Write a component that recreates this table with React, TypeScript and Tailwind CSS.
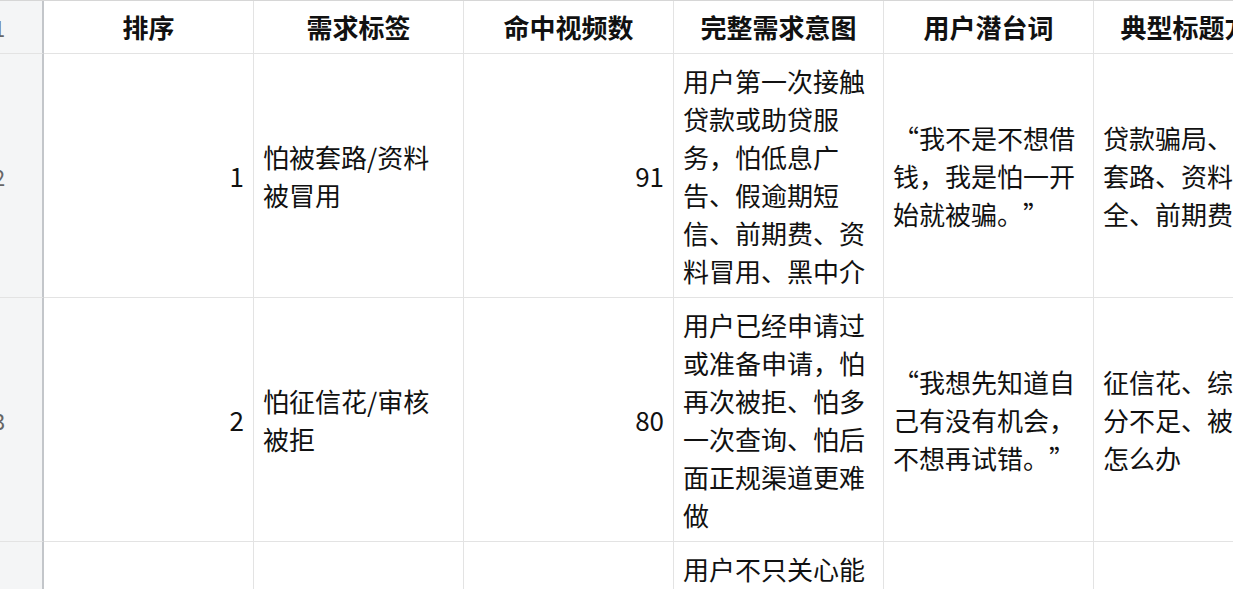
import React from "react";

type Row = {
  n: string;
  rank: string;
  label: string;
  count: string;
  intent: string;
  sub: string;
  title: string;
};

const rows: Row[] = [
  {
    n: "2",
    rank: "1",
    label: "怕被套路/资料被冒用",
    count: "91",
    intent: "用户第一次接触贷款或助贷服务，怕低息广告、假逾期短信、前期费、资料冒用、黑中介",
    sub: "“我不是不想借钱，我是怕一开始就被骗。”",
    title: "贷款骗局、怕被套路、资料不安全、前期费陷阱",
  },
  {
    n: "3",
    rank: "2",
    label: "怕征信花/审核被拒",
    count: "80",
    intent: "用户已经申请过或准备申请，怕再次被拒、怕多一次查询、怕后面正规渠道更难做",
    sub: "“我想先知道自己有没有机会，不想再试错。”",
    title: "征信花、综合评分不足、被拒后怎么办",
  },
  {
    n: "4",
    rank: "3",
    label: "怕利息高/还款压力大",
    count: "72",
    intent: "用户不只关心能不能借到，更关心综合成本、月供压力和提前还款规则",
    sub: "“我想知道真实要还多少钱。”",
    title: "利率怎么算、月供压力、提前还款",
  },
];

const headers = ["排序", "需求标签", "命中视频数", "完整需求意图", "用户潜台词", "典型标题方向"];

function RowHead({ n, className = "" }: { n: string; className?: string }) {
  return (
    <div
      className={`flex items-center bg-[#f4f5f6] border-r-2 border-r-[#c3c6ca] border-b border-b-[#e3e3e3] overflow-hidden ${className}`}
    >
      <span className="-ml-[7px] text-[22px] leading-none text-[#666]">{n}</span>
    </div>
  );
}

function Cell({
  children,
  className = "",
}: {
  children: React.ReactNode;
  className?: string;
}) {
  return (
    <div
      className={`flex items-center px-[9px] py-[7.5px] border-r border-b border-[#e3e3e3] text-[26px] leading-[38px] text-[#111] break-normal [line-break:strict] [text-spacing-trim:space-all] ${className}`}
    >
      {children}
    </div>
  );
}

export default function App() {
  return (
    <div className="w-[1233px] h-[589px] overflow-hidden bg-white font-['Noto_Sans_CJK_SC','Noto_Sans',sans-serif]">
      <div className="grid grid-cols-[44px_210px_210px_210px_210px_210px_210px] w-[1304px] border-t border-t-[#d6d6d6]">
        <RowHead n="1" className="h-[53px]" />
        {headers.map((h) => (
          <div
            key={h}
            className="flex items-center justify-center h-[53px] pb-[2px] border-r border-b border-[#e3e3e3] text-[26px] font-bold text-[#111] whitespace-nowrap overflow-hidden"
          >
            {h}
          </div>
        ))}
        {rows.map((r) => (
          <React.Fragment key={r.n}>
            <RowHead n={r.n} />
            <Cell className="justify-end">{r.rank}</Cell>
            <Cell>
              <span>{r.label}</span>
            </Cell>
            <Cell className="justify-end">{r.count}</Cell>
            <Cell>
              <span>{r.intent}</span>
            </Cell>
            <Cell>
              <span>{r.sub}</span>
            </Cell>
            <Cell>
              <span>{r.title}</span>
            </Cell>
          </React.Fragment>
        ))}
      </div>
    </div>
  );
}
